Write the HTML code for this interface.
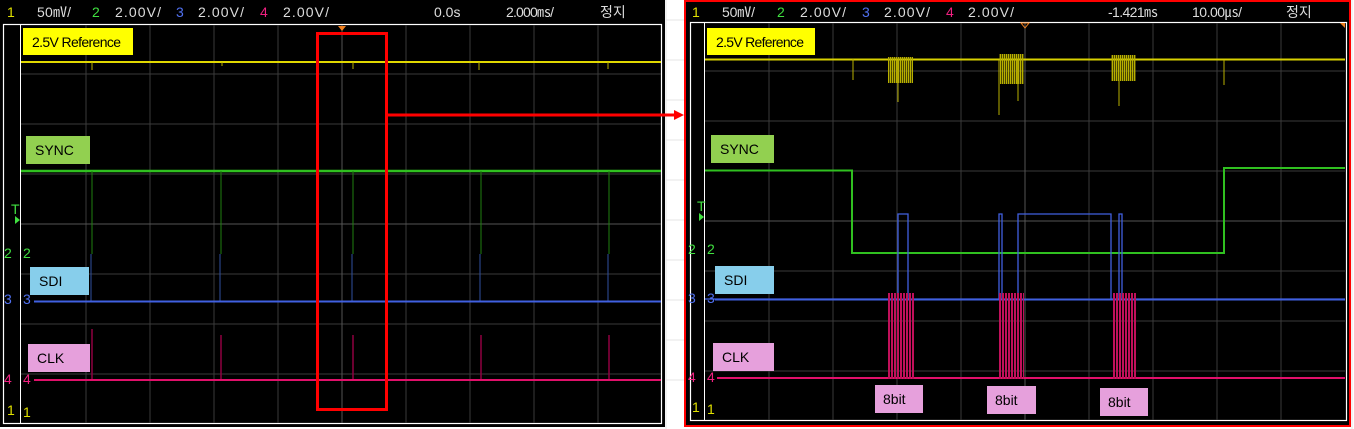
<!DOCTYPE html>
<html><head><meta charset="utf-8"><style>
html,body{margin:0;padding:0;background:#fff;width:1354px;height:429px;overflow:hidden}
svg{display:block}
text{font-family:"Liberation Sans","Noto Sans CJK KR",sans-serif}
</style></head><body>
<svg width="1354" height="429" viewBox="0 0 1354 429" xmlns="http://www.w3.org/2000/svg">
<defs>
<pattern id="burst" width="3" height="10" patternUnits="userSpaceOnUse"><rect width="2" height="10" fill="#c0105a"/></pattern>
<pattern id="yb" width="2" height="10" patternUnits="userSpaceOnUse"><rect width="1.4" height="10" fill="#b8b000"/></pattern>
</defs>
<g stroke="#e4e4e4" stroke-width="1">
<line x1="666" y1="0" x2="666" y2="429"/><line x1="1352" y1="0" x2="1352" y2="429"/>
<line x1="666" y1="20" x2="684" y2="20"/><line x1="666" y1="60" x2="684" y2="60"/><line x1="666" y1="100" x2="684" y2="100"/><line x1="666" y1="140" x2="684" y2="140"/><line x1="666" y1="180" x2="684" y2="180"/><line x1="666" y1="220" x2="684" y2="220"/><line x1="666" y1="260" x2="684" y2="260"/><line x1="666" y1="300" x2="684" y2="300"/><line x1="666" y1="340" x2="684" y2="340"/><line x1="666" y1="380" x2="684" y2="380"/>
</g>

<!-- ===== LEFT SCOPE ===== -->
<rect x="0" y="0" width="665" height="427" fill="#000"/>
<rect x="3.5" y="24.5" width="658" height="399" fill="none" stroke="#fff" stroke-width="1.2"/>
<line x1="20.5" y1="24" x2="20.5" y2="424" stroke="#fff" stroke-width="1"/>
<g stroke="#3a3a3a" stroke-width="1">
<line x1="86" y1="25" x2="86" y2="423"/><line x1="150" y1="25" x2="150" y2="423"/><line x1="214" y1="25" x2="214" y2="423"/><line x1="278" y1="25" x2="278" y2="423"/><line x1="406" y1="25" x2="406" y2="423"/><line x1="470" y1="25" x2="470" y2="423"/><line x1="534" y1="25" x2="534" y2="423"/><line x1="598" y1="25" x2="598" y2="423"/>
<line x1="21" y1="74" x2="661" y2="74"/><line x1="21" y1="124" x2="661" y2="124"/><line x1="21" y1="174" x2="661" y2="174"/><line x1="21" y1="274" x2="661" y2="274"/><line x1="21" y1="324" x2="661" y2="324"/><line x1="21" y1="374" x2="661" y2="374"/>
</g>
<line x1="342" y1="25" x2="342" y2="423" stroke="#555" stroke-width="1"/>
<line x1="21" y1="224" x2="661" y2="224" stroke="#555" stroke-width="1"/>
<path d="M338 26 L346 26 L342 31 Z" fill="#f08020"/>
<line x1="21" y1="62" x2="661" y2="62" stroke="#e0d800" stroke-width="2"/>
<g stroke="#b8b000" stroke-width="1"><line x1="92" y1="62" x2="92" y2="70"/><line x1="222" y1="62" x2="222" y2="66"/><line x1="353" y1="62" x2="353" y2="69"/><line x1="479" y1="62" x2="479" y2="70"/><line x1="608" y1="62" x2="608" y2="69"/></g>
<line x1="21" y1="171" x2="661" y2="171" stroke="#30c020" stroke-width="2.5"/>
<g stroke="#208010" stroke-width="1"><line x1="92" y1="171" x2="92" y2="254"/><line x1="221" y1="171" x2="221" y2="254"/><line x1="353" y1="171" x2="353" y2="254"/><line x1="481" y1="171" x2="481" y2="254"/><line x1="609" y1="171" x2="609" y2="254"/></g>
<g stroke="#3050a0" stroke-width="1"><line x1="91" y1="254" x2="91" y2="301"/><line x1="220" y1="254" x2="220" y2="301"/><line x1="352" y1="254" x2="352" y2="301"/><line x1="480" y1="254" x2="480" y2="301"/><line x1="608" y1="254" x2="608" y2="301"/></g>
<line x1="34" y1="301.5" x2="661" y2="301.5" stroke="#4060e0" stroke-width="2"/>
<g stroke="#900040" stroke-width="1.5"><line x1="92" y1="329" x2="92" y2="380"/><line x1="221" y1="335" x2="221" y2="380"/><line x1="353" y1="335" x2="353" y2="380"/><line x1="481" y1="335" x2="481" y2="380"/><line x1="609" y1="335" x2="609" y2="380"/></g>
<line x1="34" y1="380" x2="661" y2="380" stroke="#e0106a" stroke-width="2"/>
<g font-size="14" fill="#000">
<rect x="23" y="28" width="110" height="27" fill="#ffff00"/><text x="32" y="47" textLength="89">2.5V Reference</text>
<rect x="26" y="136" width="64" height="28" fill="#92d050"/><text x="35" y="155">SYNC</text>
<rect x="30" y="267" width="59" height="28" fill="#87ceeb"/><text x="39" y="286">SDI</text>
<rect x="28" y="344" width="62" height="28" fill="#e6a0dc"/><text x="37" y="363">CLK</text>
</g>
<g font-size="14">
<text x="7" y="17" fill="#e0e000">1</text><text x="37" y="17" fill="#ddd" textLength="34">50㎷/</text>
<text x="92" y="17" fill="#40e040">2</text><text x="115" y="17" fill="#ddd" textLength="46">2.00V/</text>
<text x="176" y="17" fill="#5070f0">3</text><text x="198" y="17" fill="#ddd" textLength="46">2.00V/</text>
<text x="260" y="17" fill="#f02080">4</text><text x="283" y="17" fill="#ddd" textLength="46">2.00V/</text>
<text x="434" y="17" fill="#ddd">0.0s</text><text x="506" y="17" fill="#ddd" textLength="48">2.000㎳/</text>
<text x="600" y="17" fill="#ddd">정지</text>
</g>
<g font-size="14">
<text x="11" y="214" fill="#40e040">T</text><path d="M15 216 L20 220 L15 224 Z" fill="#40e040"/>
<text x="4" y="258" fill="#40e040">2</text><text x="23" y="258" fill="#40e040">2</text>
<text x="4" y="304" fill="#5070f0">3</text><text x="23" y="304" fill="#5070f0">3</text>
<text x="4" y="384" fill="#f02080">4</text><text x="23" y="384" fill="#f02080">4</text>
<text x="7" y="415" fill="#e0e000">1</text><text x="23" y="417" fill="#e0e000">1</text>
</g>
<rect x="317.5" y="33.5" width="69" height="376" fill="none" stroke="#ff0000" stroke-width="3"/>
<line x1="386" y1="115" x2="676" y2="115" stroke="#ff0000" stroke-width="3"/>
<path d="M674 110 L684 115 L674 120 Z" fill="#ff0000"/>

<!-- ===== RIGHT SCOPE ===== -->
<rect x="684" y="0" width="667" height="427" fill="#000"/>
<rect x="685" y="1" width="665" height="425" fill="none" stroke="#ff0000" stroke-width="2"/>
<rect x="690.5" y="22.5" width="656" height="398" fill="none" stroke="#fff" stroke-width="1.2"/>
<line x1="704.5" y1="22" x2="704.5" y2="421" stroke="#fff" stroke-width="1"/>
<g stroke="#3a3a3a" stroke-width="1">
<line x1="769" y1="23" x2="769" y2="420"/><line x1="833" y1="23" x2="833" y2="420"/><line x1="897" y1="23" x2="897" y2="420"/><line x1="961" y1="23" x2="961" y2="420"/><line x1="1089" y1="23" x2="1089" y2="420"/><line x1="1153" y1="23" x2="1153" y2="420"/><line x1="1217" y1="23" x2="1217" y2="420"/><line x1="1281" y1="23" x2="1281" y2="420"/>
<line x1="705" y1="71" x2="1345" y2="71"/><line x1="705" y1="121" x2="1345" y2="121"/><line x1="705" y1="171" x2="1345" y2="171"/><line x1="705" y1="271" x2="1345" y2="271"/><line x1="705" y1="321" x2="1345" y2="321"/><line x1="705" y1="371" x2="1345" y2="371"/>
</g>
<line x1="1025" y1="23" x2="1025" y2="420" stroke="#555"/>
<line x1="705" y1="221" x2="1345" y2="221" stroke="#555"/>
<path d="M1021 23 L1029 23 L1025 28 Z" fill="none" stroke="#f08020"/>
<path d="M1340 23 L1345 23 L1345 28 Z" fill="#f08020"/>
<line x1="705" y1="59.5" x2="1345" y2="59.5" stroke="#d8d000" stroke-width="2"/>
<rect x="888" y="57" width="25" height="26" fill="url(#yb)"/>
<rect x="999" y="54" width="25" height="30" fill="url(#yb)"/>
<rect x="1111" y="55" width="25" height="26" fill="url(#yb)"/>
<g stroke="#b8b000" stroke-width="1"><line x1="853" y1="59" x2="853" y2="80"/><line x1="898" y1="60" x2="898" y2="102"/><line x1="999" y1="60" x2="999" y2="115"/><line x1="1018" y1="60" x2="1018" y2="101"/><line x1="1119" y1="60" x2="1119" y2="106"/><line x1="1224" y1="60" x2="1224" y2="85"/></g>
<polyline points="705,170.5 852,170.5 852,253 1224,253 1224,168 1345,168" fill="none" stroke="#30c020" stroke-width="2"/>
<polyline points="705,299 898,299 898,214 908,214 908,299 999,299 999,214 1002,214 1002,299 1018,299 1018,214 1111,214 1111,299 1119,299 1119,214 1122,214 1122,299 1345,299" fill="none" stroke="#4060e0" stroke-width="1.3"/>
<line x1="715" y1="299.5" x2="1345" y2="299.5" stroke="#4060e0" stroke-width="2"/>
<line x1="717" y1="378" x2="1345" y2="378" stroke="#e0106a" stroke-width="2"/>
<rect x="888" y="293" width="26" height="86" fill="url(#burst)"/>
<rect x="999" y="293" width="25" height="86" fill="url(#burst)"/>
<rect x="1112" y="293" width="25" height="86" fill="url(#burst)"/>
<g font-size="14" fill="#000">
<rect x="707" y="28" width="108" height="27" fill="#ffff00"/><text x="716" y="47" textLength="88">2.5V Reference</text>
<rect x="711" y="135" width="63" height="28" fill="#92d050"/><text x="720" y="154">SYNC</text>
<rect x="715" y="266" width="59" height="28" fill="#87ceeb"/><text x="724" y="285">SDI</text>
<rect x="713" y="343" width="61" height="28" fill="#e6a0dc"/><text x="722" y="362">CLK</text>
<rect x="875" y="385" width="48" height="28" fill="#e6a0dc"/><text x="883" y="404">8bit</text>
<rect x="987" y="386" width="49" height="28" fill="#e6a0dc"/><text x="995" y="405">8bit</text>
<rect x="1100" y="388" width="48" height="28" fill="#e6a0dc"/><text x="1108" y="407">8bit</text>
</g>
<g font-size="14">
<text x="692" y="17" fill="#e0e000">1</text><text x="722" y="17" fill="#ddd" textLength="33">50㎷/</text>
<text x="777" y="17" fill="#40e040">2</text><text x="800" y="17" fill="#ddd" textLength="46">2.00V/</text>
<text x="862" y="17" fill="#5070f0">3</text><text x="884" y="17" fill="#ddd" textLength="46">2.00V/</text>
<text x="946" y="17" fill="#f02080">4</text><text x="968" y="17" fill="#ddd" textLength="46">2.00V/</text>
<text x="1108" y="17" fill="#ddd" textLength="50">-1.421㎳</text><text x="1192" y="17" fill="#ddd" textLength="50">10.00㎲/</text>
<text x="1286" y="17" fill="#ddd">정지</text>
</g>
<g font-size="14">
<text x="697" y="211" fill="#40e040">T</text><path d="M699 213 L704 217 L699 221 Z" fill="#40e040"/>
<text x="688" y="254" fill="#40e040">2</text><text x="707" y="254" fill="#40e040">2</text>
<text x="688" y="303" fill="#5070f0">3</text><text x="707" y="303" fill="#5070f0">3</text>
<text x="688" y="382" fill="#f02080">4</text><text x="707" y="382" fill="#f02080">4</text>
<text x="692" y="412" fill="#e0e000">1</text><text x="707" y="414" fill="#e0e000">1</text>
</g>
</svg>
</body></html>
